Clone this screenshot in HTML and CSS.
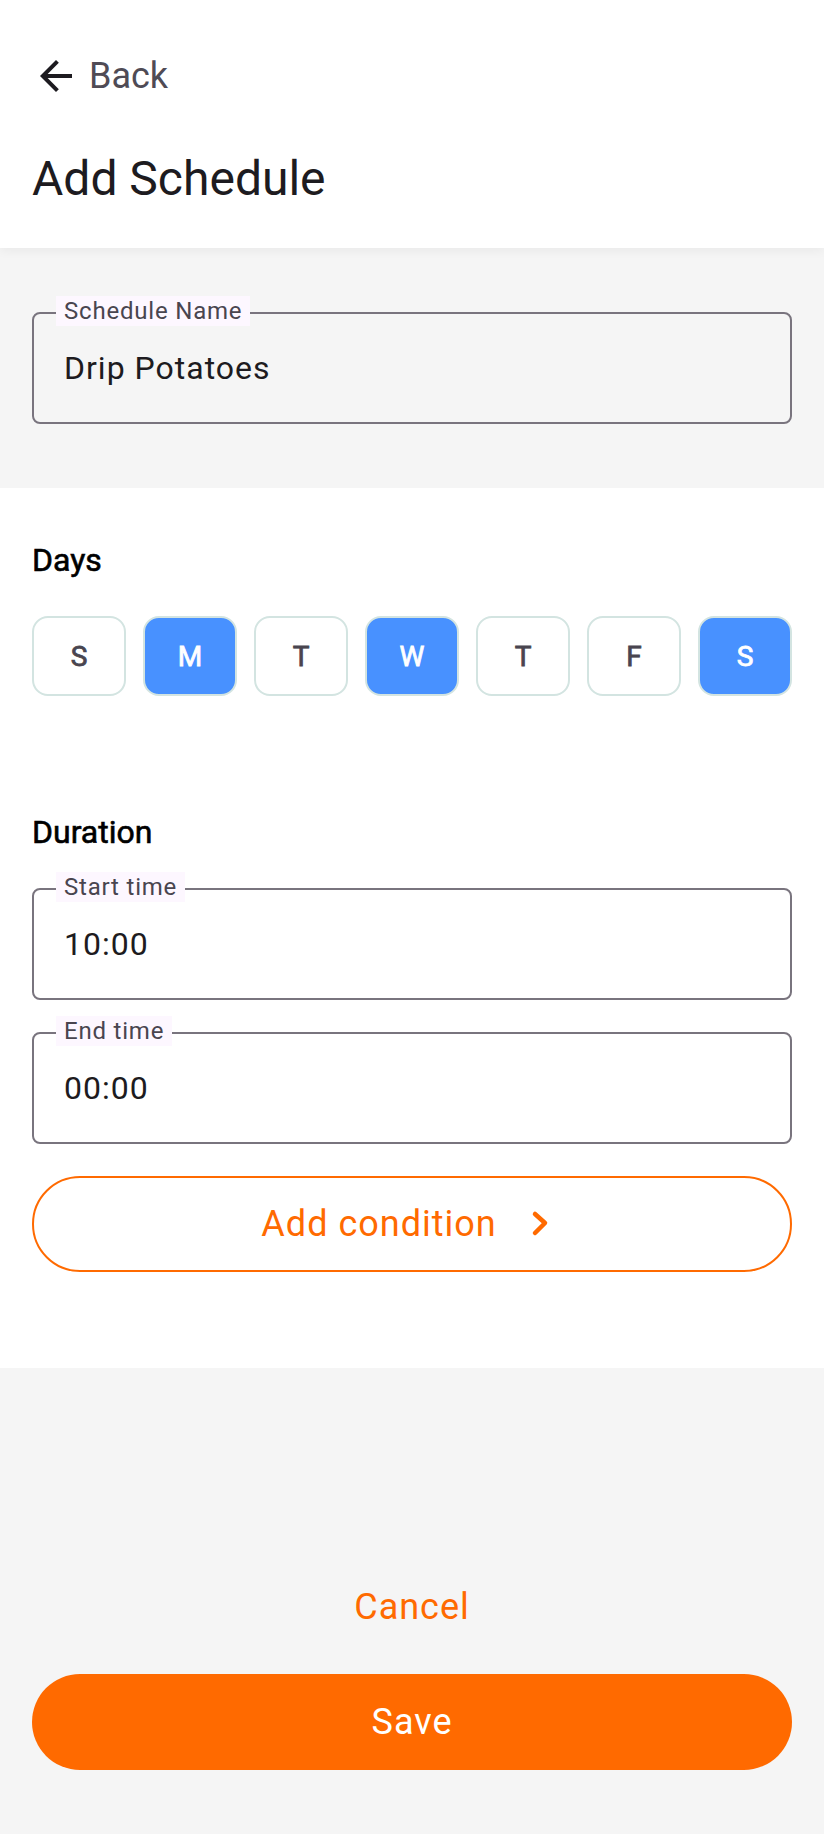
FILE: index.html
```html
<!DOCTYPE html>
<html lang="en">
<head>
    <meta charset="UTF-8">
    <meta name="viewport" content="width=device-width, initial-scale=1.0">
    <title>Add Schedule</title>
    <link rel="stylesheet" href="styles.css">
</head>
<body>
    <div class="page">
        <header class="top-bar">
            <a class="back-link" href="#">
                <svg class="back-icon" viewBox="0 0 24 24"><path d="M20 11H7.83l5.59-5.59L12 4l-8 8 8 8 1.41-1.41L7.83 13H20v-2z"/></svg>
                <span>Back</span>
            </a>
            <h1>Add Schedule</h1>
        </header>

        <section class="name-section">
            <div class="field">
                <span class="field-label">Schedule Name</span>
                <span class="field-value">Drip Potatoes</span>
            </div>
        </section>

        <section class="form-section">
            <h2>Days</h2>
            <div class="day-row">
                <button class="day">S</button>
                <button class="day on">M</button>
                <button class="day">T</button>
                <button class="day on">W</button>
                <button class="day">T</button>
                <button class="day">F</button>
                <button class="day on">S</button>
            </div>

            <h2 class="duration-title">Duration</h2>
            <div class="field">
                <span class="field-label">Start time</span>
                <span class="field-value">10:00</span>
            </div>
            <div class="field">
                <span class="field-label">End time</span>
                <span class="field-value">00:00</span>
            </div>

            <button class="outline-btn">
                <span>Add condition</span>
                <svg class="chevron" viewBox="0 0 36 36"><polyline points="8,8 18,17 8,27"/></svg>
            </button>
        </section>

        <footer class="actions">
            <button class="text-btn">Cancel</button>
            <button class="filled-btn">Save</button>
        </footer>
    </div>
</body>
</html>
```

FILE: styles.css
```css
body {
    margin: 0;
    background-color: #f5f5f5;
    font-family: Roboto, "Liberation Sans", sans-serif;
    color: #1d1b20;
}
button {
    font-family: inherit;
    cursor: pointer;
}
.page {
    min-height: 100vh;
    display: flex;
    flex-direction: column;
}

/* header */
.top-bar {
    position: relative;
    z-index: 1;
    background-color: #fff;
    padding: 48px 32px 37px;
    box-shadow: 0 3px 10px rgba(0, 0, 0, 0.05);
}
.back-link {
    display: flex;
    align-items: center;
    gap: 9px;
    height: 56px;
    color: #4f4b55;
    text-decoration: none;
    font-size: 36px;
}
.back-icon {
    width: 48px;
    height: 48px;
    fill: #1d1b20;
}
.top-bar h1 {
    margin: 43px 0 0;
    font-size: 48px;
    font-weight: 400;
    line-height: 64px;
}

/* text fields */
.name-section {
    padding: 64px 32px;
}
.field {
    position: relative;
    box-sizing: border-box;
    height: 112px;
    padding: 0 30px;
    border: 2px solid #79747e;
    border-radius: 8px;
    display: flex;
    align-items: center;
}
.field + .field {
    margin-top: 32px;
}
.field-label {
    position: absolute;
    top: -18px;
    left: 22px;
    padding: 0 8px;
    background-color: #fdf7ff;
    color: #49454f;
    font-size: 24px;
    line-height: 30px;
    letter-spacing: 0.8px;
}
.field-value {
    font-size: 32px;
    letter-spacing: 1px;
}

/* days and duration */
.form-section {
    background-color: #fff;
    padding: 48px 32px 96px;
}
.form-section h2 {
    margin: 0 0 32px;
    font-size: 32px;
    font-weight: 400;
    -webkit-text-stroke: 0.6px #000;
    line-height: 48px;
    color: #000;
}
.form-section .duration-title {
    margin-top: 112px;
}
.day-row {
    display: flex;
    justify-content: space-between;
}
.day {
    width: 94px;
    height: 80px;
    border: 2px solid #d3e4e1;
    border-radius: 16px;
    background-color: #fff;
    color: #49454f;
    font-size: 28px;
    font-weight: 400;
    -webkit-text-stroke: 0.8px #49454f;
}
.day.on {
    background-color: #4891ff;
    color: #fff;
    -webkit-text-stroke-color: #fff;
}

.outline-btn {
    width: 100%;
    height: 96px;
    margin-top: 32px;
    border: 2px solid #ff6a00;
    border-radius: 48px;
    background-color: #fff;
    color: #ff6a00;
    font-size: 36px;
    letter-spacing: 1px;
    display: flex;
    align-items: center;
    justify-content: center;
    gap: 30px;
}
.chevron {
    width: 36px;
    height: 36px;
    fill: none;
    stroke: #ff6a00;
    stroke-width: 4.5;
    stroke-linecap: round;
    stroke-linejoin: round;
}

/* bottom actions */
.actions {
    margin-top: auto;
    padding: 0 32px 64px;
    display: flex;
    flex-direction: column;
}
.text-btn {
    height: 80px;
    margin-bottom: 27px;
    border: none;
    background: none;
    color: #ff6a00;
    font-size: 36px;
    letter-spacing: 1px;
}
.filled-btn {
    height: 96px;
    border: none;
    border-radius: 48px;
    background-color: #ff6a00;
    color: #fff;
    font-size: 36px;
    letter-spacing: 1px;
}
```
